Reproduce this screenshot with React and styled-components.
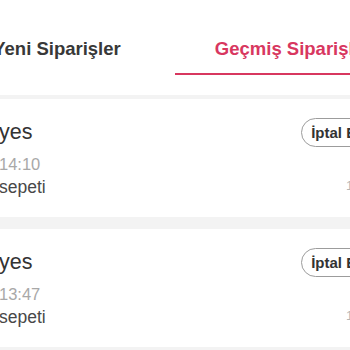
import React from 'react'
import styled, { createGlobalStyle } from 'styled-components'

const GlobalStyle = createGlobalStyle`
    html, body {
        margin: 0;
        padding: 0;
        background: #f3f3f3;
    }
    body {
        font-family: "Liberation Sans", Arial, sans-serif;
        overflow: hidden;
    }
`

const Viewport = styled.div`
    width: 350px;
    height: 350px;
    overflow: hidden;
    background: #f3f3f3;
`

const Page = styled.div`
    width: 472px;
    margin-left: -61px;
`

const Header = styled.header`
    display: flex;
    background: #fff;
    padding-bottom: 20px;
`

const Tab = styled.div`
    flex: 1;
    height: 75px;
    box-sizing: border-box;
    padding-top: 25px;
    display: flex;
    align-items: center;
    justify-content: center;
    font-size: 18.5px;
    font-weight: 700;
    color: ${(p) => (p.active ? '#d8375f' : '#383838')};
    border-bottom: 2px solid ${(p) => (p.active ? '#d8375f' : 'transparent')};
`

const List = styled.div`
    display: flex;
    flex-direction: column;
    gap: 12px;
    padding: 4px 0 0 12px;
`

const Card = styled.div`
    background: #fff;
    height: 118px;
    box-sizing: border-box;
    padding: 19px 14px 0 48px;
`

const Row = styled.div`
    display: flex;
    justify-content: space-between;
    align-items: ${(p) => p.align || 'flex-start'};
`

const Name = styled.div`
    margin-top: 2px;
    font-size: 21.5px;
    color: #333;
    line-height: 24px;
`

const CancelButton = styled.button`
    height: 29px;
    padding: 0 9px;
    border: 1px solid #9c9c9c;
    border-radius: 15px;
    background: #fff;
    font-family: inherit;
    font-size: 15px;
    font-weight: 700;
    color: #333;
`

const Time = styled.div`
    margin-top: 8px;
    font-size: 16.5px;
    line-height: 19px;
    color: #a8a8a8;
`

const Store = styled.div`
    margin-top: 3px;
    font-size: 17.5px;
    line-height: 20px;
    color: #484848;
`

const Amount = styled.div`
    font-size: 13px;
    color: #b5b5b5;
`

const orders = [
    { id: 1, name: 'yes', time: '14:10', store: 'sepeti', amount: '15,00 TL' },
    { id: 2, name: 'yes', time: '13:47', store: 'sepeti', amount: '15,00 TL' },
]

const OrderCard = ({ name, time, store, amount }) => (
    <Card>
        <Row>
            <Name>{name}</Name>
            <CancelButton>İptal Edildi</CancelButton>
        </Row>
        <Time>{time}</Time>
        <Row align="center">
            <Store>{store}</Store>
            <Amount>{amount}</Amount>
        </Row>
    </Card>
)

const App = () => (
    <Viewport>
        <GlobalStyle />
        <Page>
            <Header>
                <Tab>Yeni Siparişler</Tab>
                <Tab active>Geçmiş Siparişler</Tab>
            </Header>
            <List>
                {orders.map((o) => (
                    <OrderCard key={o.id} {...o} />
                ))}
            </List>
        </Page>
    </Viewport>
)

export default App
